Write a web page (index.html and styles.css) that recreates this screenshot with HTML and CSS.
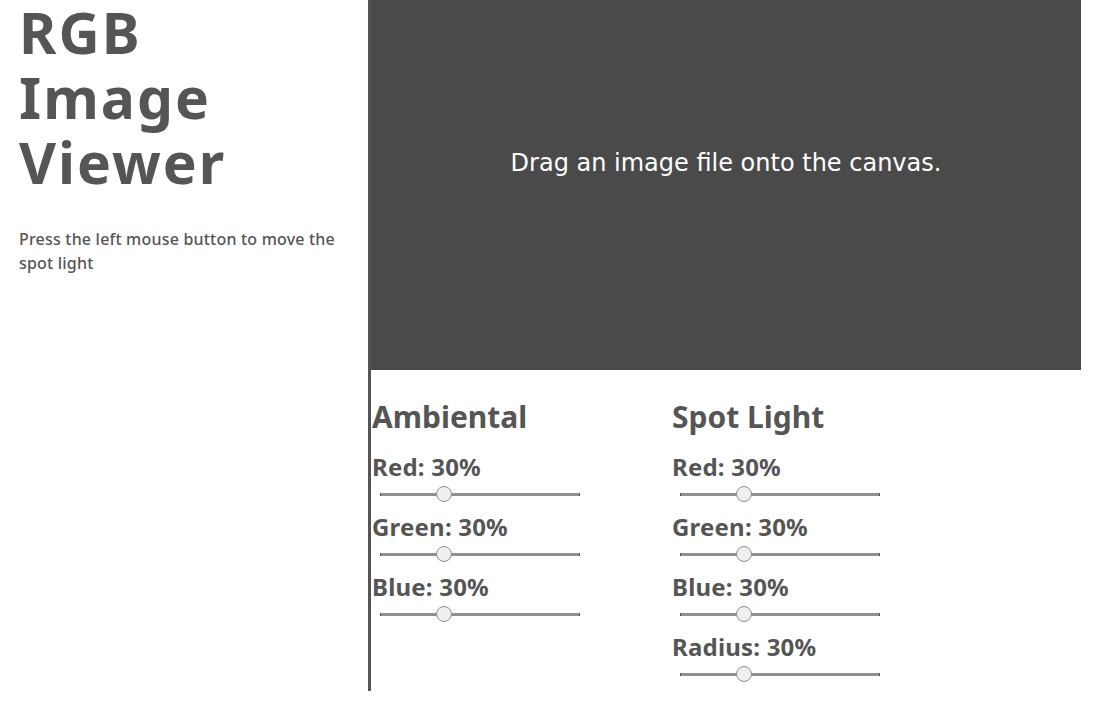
FILE: index.html
```html
<!DOCTYPE html>
<html lang="en">
<head>
<meta charset="utf-8">
<title>RGB Image Viewer</title>
<link rel="stylesheet" href="styles.css">
</head>
<body>
<div class="layout">
  <aside class="sidebar">
    <h1 class="title">RGB Image Viewer</h1>
    <p class="hint">Press the left mouse button to move the spot light</p>
  </aside>
  <main class="main">
    <div class="canvas"><span class="canvas-msg">Drag an image file onto the canvas.</span></div>
    <div class="controls">
      <section class="panel">
        <h2 class="panel-title">Ambiental</h2>
        <div class="control"><label class="control-label">Red: 30%</label><input class="slider" type="range" min="0" max="100" value="30"></div>
        <div class="control"><label class="control-label">Green: 30%</label><input class="slider" type="range" min="0" max="100" value="30"></div>
        <div class="control"><label class="control-label">Blue: 30%</label><input class="slider" type="range" min="0" max="100" value="30"></div>
      </section>
      <section class="panel">
        <h2 class="panel-title">Spot Light</h2>
        <div class="control"><label class="control-label">Red: 30%</label><input class="slider" type="range" min="0" max="100" value="30"></div>
        <div class="control"><label class="control-label">Green: 30%</label><input class="slider" type="range" min="0" max="100" value="30"></div>
        <div class="control"><label class="control-label">Blue: 30%</label><input class="slider" type="range" min="0" max="100" value="30"></div>
        <div class="control"><label class="control-label">Radius: 30%</label><input class="slider" type="range" min="0" max="100" value="30"></div>
      </section>
    </div>
  </main>
</div>
</body>
</html>
```
FILE: styles.css
```css
html, body {
  margin: 0;
  padding: 0;
  background: #ffffff;
}

body {
  font-family: "Noto Sans", "Open Sans", sans-serif;
  color: #555555;
}

.layout {
  display: flex;
  align-items: flex-start;
}

.sidebar {
  width: 368px;
  box-sizing: border-box;
  padding: 0 20px 0 19px;
}

.title {
  margin: 0;
  padding-top: 0;
  font-size: 57px;
  line-height: 65px;
  font-weight: 700;
  letter-spacing: 2px;
  width: 250px;
}

.hint {
  margin: 32px 0 0;
  font-size: 16px;
  line-height: 24px;
  font-weight: 500;
  letter-spacing: 0.2px;
}

.main {
  border-left: 3px solid #555555;
  width: 710px;
  padding-bottom: 9px;
}

.canvas {
  height: 370px;
  background: #4a4a4a;
  display: flex;
  justify-content: center;
  box-sizing: border-box;
  padding-top: 147px;
}

.canvas-msg {
  font-family: "DejaVu Sans", sans-serif;
  font-size: 24px;
  line-height: 32px;
  color: #ffffff;
}

.controls {
  display: flex;
  padding-left: 1px;
  padding-top: 27px;
}

.panel {
  width: 300px;
  display: flex;
  flex-direction: column;
  gap: 11px;
}

.panel-title {
  margin: 0 0 4px;
  font-size: 30px;
  line-height: 40px;
  font-weight: 700;
}

.control {
  display: flex;
  flex-direction: column;
  align-items: flex-start;
}

.control-label {
  font-size: 24px;
  line-height: 30px;
  font-weight: 700;
  letter-spacing: 0.2px;
}

.slider {
  -webkit-appearance: none;
  appearance: none;
  width: 200px;
  height: 16px;
  margin: 4px 0 0 8px;
  padding: 0;
  background: transparent;
}

.control + .control {
  margin-top: -1px;
}

.slider::-webkit-slider-runnable-track {
  height: 3px;
  background: #919191;
  border-left: 1px solid #555;
  border-right: 1px solid #555;
}

.slider::-webkit-slider-thumb {
  -webkit-appearance: none;
  appearance: none;
  width: 16px;
  height: 16px;
  margin-top: -6.5px;
  border-radius: 50%;
  background: #efefef;
  border: 1px solid #8f8f8f;
  box-sizing: border-box;
}
```
